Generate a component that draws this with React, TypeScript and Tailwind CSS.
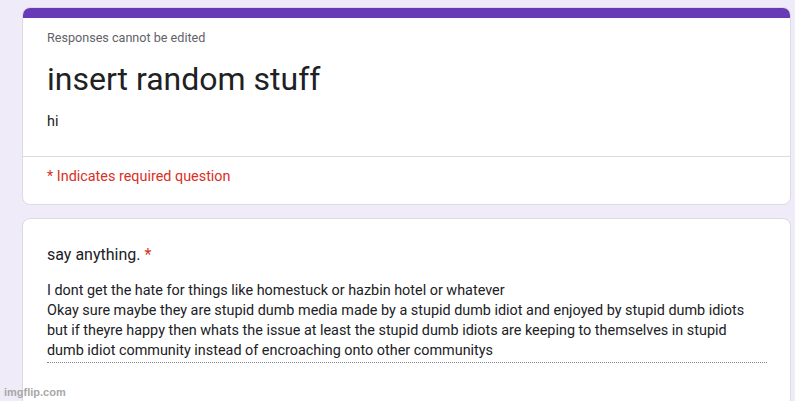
export default function App() {
  return (
    <div className="relative w-[795px] h-[401px] overflow-hidden bg-[#f0ebf8] font-['Roboto',sans-serif] pt-[7px]">
      <div className="ml-[22px] w-[769px] bg-white rounded-lg border border-[#dadce0] overflow-hidden">
        <div className="h-[10px] bg-[#673ab7]" />
        <div className="px-[24px] pt-[12px] pb-[24px]">
          <p className="text-[12.6px] leading-[16px] text-[#5f6368]">Responses cannot be edited</p>
          <h1 className="mt-[13px] text-[32px] leading-[40px] text-[#202124]">insert random stuff</h1>
          <p className="mt-[13px] text-[14.4px] leading-[20px] text-[#202124]">hi</p>
        </div>
        <div className="border-t border-[#dadce0] px-[24px] pt-[10px] pb-[17px]">
          <p className="text-[14.4px] leading-[20px] text-[#d93025]">* Indicates required question</p>
        </div>
      </div>
      <div className="ml-[22px] mt-[13px] w-[769px] h-[220px] bg-white rounded-lg border border-[#dadce0] px-[24px] pt-[24px]">
        <p className="text-[16px] leading-[24px] text-[#202124]">
          say anything. <span className="text-[#d93025]">*</span>
        </p>
        <div className="mt-[14px] w-[720px] border-b border-dotted border-[#80868b] pb-[1px] text-[14.4px] leading-[20px] text-[#202124]">
          <p>I dont get the hate for things like homestuck or hazbin hotel or whatever</p>
          <p>Okay sure maybe they are stupid dumb media made by a stupid dumb idiot and enjoyed by stupid dumb idiots</p>
          <p>but if theyre happy then whats the issue at least the stupid dumb idiots are keeping to themselves in stupid</p>
          <p>dumb idiot community instead of encroaching onto other communitys</p>
        </div>
      </div>
      <span className="absolute left-[4px] top-[384px] text-[11px] leading-[16px] font-bold text-[#a8a8a8] font-['Liberation_Sans',sans-serif]">imgflip.com</span>
    </div>
  )
}
